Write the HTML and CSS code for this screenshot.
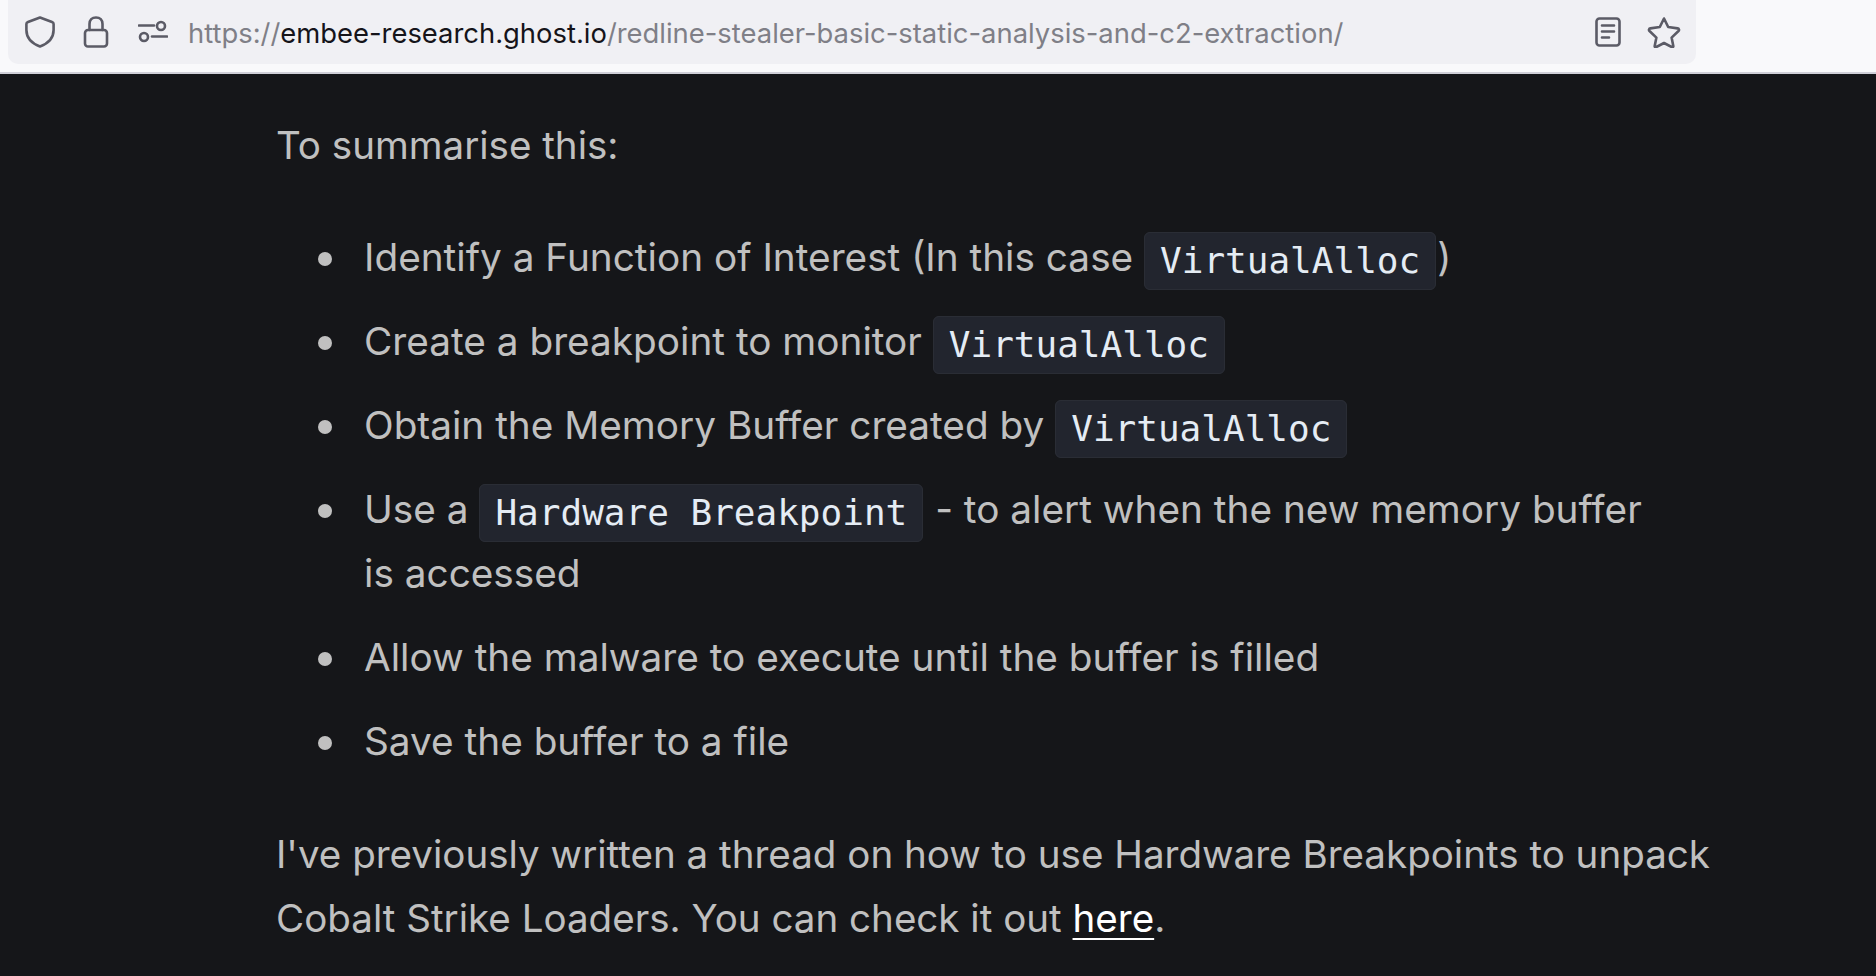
FILE: index.html
```html
<!DOCTYPE html>
<html lang="en">
<head>
<meta charset="utf-8">
<title>Redline Stealer</title>
<link rel="stylesheet" href="styles.css">
</head>
<body>
<header class="toolbar">
  <div class="urlbar">
    <svg class="icon shield" viewBox="0 0 32 34" width="32" height="34"><path d="M16 2.5 L28 7 C29 7.4 29.6 8 29.6 9 L29.6 15 C29.6 23 24 28.5 16 31.5 C8 28.5 2.4 23 2.4 15 L2.4 9 C2.4 8 3 7.4 4 7 Z"/></svg>
    <svg class="icon lock" viewBox="0 0 26 34" width="26" height="34"><path d="M6.5 15 L6.5 9 C6.5 5 9 2.5 13 2.5 C17 2.5 19.5 5 19.5 9 L19.5 15"/><rect x="2" y="15" width="22" height="16.5" rx="3"/></svg>
    <svg class="icon perms" viewBox="0 0 30 24" width="30" height="24"><path d="M1 5.5 H16"/><circle cx="23" cy="6" r="4"/><circle cx="6" cy="17" r="4"/><path d="M14 16.5 H29"/></svg>
    <div class="url"><span class="dim">https://</span><span class="host">embee-research.ghost.io</span><span class="dim">/redline-stealer-basic-static-analysis-and-c2-extraction/</span></div>
    <svg class="icon reader" viewBox="0 0 26 30" width="26" height="30"><rect x="1.5" y="1.5" width="23" height="27" rx="3"/><path d="M7 8.5 H19 M7 14.5 H19 M7 20.5 H14"/></svg>
    <svg class="icon star" viewBox="0 0 34 32" width="34" height="32"><path d="M17 2.5 L21.2 11 L30.6 12.4 C32 12.6 32.5 14 31.5 15 L24.6 21.6 L26.3 30 C26.5 31 25.5 31.6 24.6 31 L17 27 L9.4 31 C8.5 31.6 7.5 31 7.7 30 L9.4 21.6 L2.5 15 C1.5 14 2 12.6 3.4 12.4 L12.8 11 Z"/></svg>
  </div>
</header>
<main class="article">
  <p class="para">To summarise this:</p>
  <ul class="list">
    <li>Identify a Function of Interest (In this case <code>VirtualAlloc</code>)</li>
    <li>Create a breakpoint to monitor <code>VirtualAlloc</code></li>
    <li>Obtain the Memory Buffer created by <code>VirtualAlloc</code></li>
    <li>Use a <code>Hardware Breakpoint</code> - to alert when the new memory buffer is accessed</li>
    <li>Allow the malware to execute until the buffer is filled</li>
    <li>Save the buffer to a file</li>
  </ul>
  <p class="para">I've previously written a thread on how to use Hardware Breakpoints to unpack Cobalt Strike Loaders. You can check it out <a href="#">here</a>.</p>
</main>
</body>
</html>
```
FILE: styles.css
```css
* { box-sizing: border-box; }
html, body { margin: 0; height: 100%; overflow: hidden; }
body { background: #151619; font-family: Inter, "Liberation Sans", sans-serif; }
.toolbar { height: 74px; background: #f9f9fb; border-bottom: 2px solid #cfcfd8; padding: 0 180px 8px 8px; }
.urlbar { height: 64px; background: #f0f0f4; border-radius: 0 0 10px 10px; display: flex; align-items: center; padding-left: 16px; }
.icon { fill: none; stroke: #5b5b66; stroke-width: 2.6; stroke-linecap: round; stroke-linejoin: round; flex: none; }
.lock { margin-left: 27px; }
.perms { margin-left: 29px; }
.url { margin-left: 20px; flex: 1; font-size: 27.4px; line-height: 34px; padding-top: 2px; white-space: nowrap; }
.dim { color: #7f7f87; }
.host { color: #15141a; }
.star { margin-left: 26px; margin-right: 15px; }
.article { padding: 0 100px 0 276px; color: #c0c0c0; font-size: 38.55px; line-height: 64px; }
.para { margin: 0; padding-top: 39px; }
.list { margin: 48px 0 0; padding: 0 106px 0 88px; list-style: none; font-size: 38.75px; }
.list li { margin-top: 20px; position: relative; }
.list li:first-child { margin-top: 0; }
.list li::before { content: ""; position: absolute; left: -46px; top: 27px; width: 14px; height: 14px; border-radius: 50%; background: #c0c0c0; }
code { font-family: "DejaVu Sans Mono", monospace; font-size: 36px; line-height: 1; color: #e5ecf4; background: #22252e; border: 1px solid #2a2d35; border-radius: 6px; padding: 7px 15px 8px; margin: 0 1px 0 0; position: relative; top: 2px; }
a { color: #fff; text-decoration: underline; text-underline-offset: 6px; text-decoration-thickness: 2px; }
.list + .para { padding-top: 49px; }
```
